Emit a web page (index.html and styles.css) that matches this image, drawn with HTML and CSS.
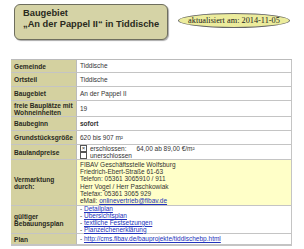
FILE: index.html
```html
<!DOCTYPE html>
<html>
<head>
<meta charset="utf-8">
<link rel="stylesheet" href="styles.css">
</head>
<body>
<div class="top">
  <div class="title">Baugebiet<br>„An der Pappel II“ in Tiddische</div>
  <div class="updated">aktualisiert am: 2014-11-05</div>
</div>
<div class="rule"></div>
<table class="info">
  <tr class="r13"><th>Gemeinde</th><td>Tiddische</td></tr>
  <tr class="r14"><th>Ortsteil</th><td>Tiddische</td></tr>
  <tr class="r14"><th>Baugebiet</th><td>An der Pappel II</td></tr>
  <tr class="r16"><th>freie Bauplätze mit Wohneinheiten</th><td>19</td></tr>
  <tr class="r14"><th>Baubeginn</th><td class="b">sofort</td></tr>
  <tr class="r14"><th>Grundstücksgröße</th><td>620 bis 907 m²</td></tr>
  <tr><th>Baulandpreise</th><td class="price">
    <div class="chk"><span class="box">×</span>erschlossen: <span class="amt">64,00 ab 89,00 €/m²</span></div>
    <div class="chk"><span class="box"></span>unerschlossen</div>
  </td></tr>
  <tr><th>Vermarktung durch:</th><td class="contact">FIBAV Geschäftsstelle Wolfsburg<br>Friedrich-Ebert-Straße 61-63<br>Telefon: 05361 3065910 / 911<br>Herr Vogel / Herr Paschkowiak<br>Telefax: 05361 3065 929<br>eMail: <a>onlinevertrieb@fibav.de</a></td></tr>
  <tr><th>gültiger Bebauungsplan</th><td class="links">- <a>Detailplan</a><br>- <a>Übersichtsplan</a><br>- <a>textliche Festsetzungen</a><br>- <a>Planzeichenerklärung</a></td></tr>
  <tr class="r11"><th>Plan</th><td class="links">- <a>http://cms.fibav.de/bauprojekte/tiddischebp.html</a></td></tr>
</table>
</body>
</html>
```
FILE: styles.css
```css
html, body { margin: 0; padding: 0; background: #fff; }
body { width: 304px; height: 249px; overflow: hidden; font-family: "Liberation Sans", Arial, sans-serif; color: #222; }
.top { display: flex; align-items: flex-start; padding: 4px 0 0 14px; height: 55px; box-sizing: border-box; }
.title {
  width: 154px; height: 36px; box-sizing: border-box; white-space: nowrap;
  background: #d5d3a6; border: 1px solid #6e6e5e; border-radius: 6px;
  padding: 3px 0 0 8px;
  font-weight: bold; font-size: 9.3px; line-height: 11px; color: #2a2a20;
  box-shadow: 1px 1px 1px #aaa;
}
.updated {
  margin: 9px 0 0 10px; width: 112px; height: 15px; box-sizing: border-box;
  background: #ecec9c; border: 1px solid #666; border-radius: 50%;
  font-family: "Liberation Serif", serif; font-size: 8.3px; line-height: 13px;
  text-align: center; color: #222;
}
.rule { margin-left: 11px; width: 281px; height: 1px; background: #bbb; margin-top: 4px; }
table.info { margin-left: 11px; width: 281px; border-collapse: separate; border-spacing: 0; border-right: 1px solid #c4c4c4; border-bottom: 1px solid #c4c4c4; }
.info th, .info td { border-bottom: 1px solid #c4c4c4; padding: 0 3px; vertical-align: middle; text-align: left; }
.info th { width: 59px; background: #d4d1a0; font-weight: bold; font-size: 6.6px; line-height: 7px; color: #2a2a20; border-right: 1px solid #bbb; }
.info td { font-size: 6.5px; line-height: 7.2px; color: #333; }
.r11 { height: 11px; } .r13 { height: 13px; } .r14 { height: 14px; } .r16 { height: 16px; }
.info td.b { font-weight: bold; }
.chk { display: flex; align-items: center; height: 7px; }
.box { display: inline-block; width: 5px; height: 5px; border: 1px solid #555; margin-right: 3px; font-size: 6px; line-height: 5px; text-align: center; }
.amt { margin-left: 10px; }
.info td.contact { background: #ffffc8; padding-top: 1px; padding-bottom: 1px; }
.info a { color: #2233bb; text-decoration: underline; }
.info td.links { padding-top: 0; padding-bottom: 0; line-height: 6.8px; }
```
